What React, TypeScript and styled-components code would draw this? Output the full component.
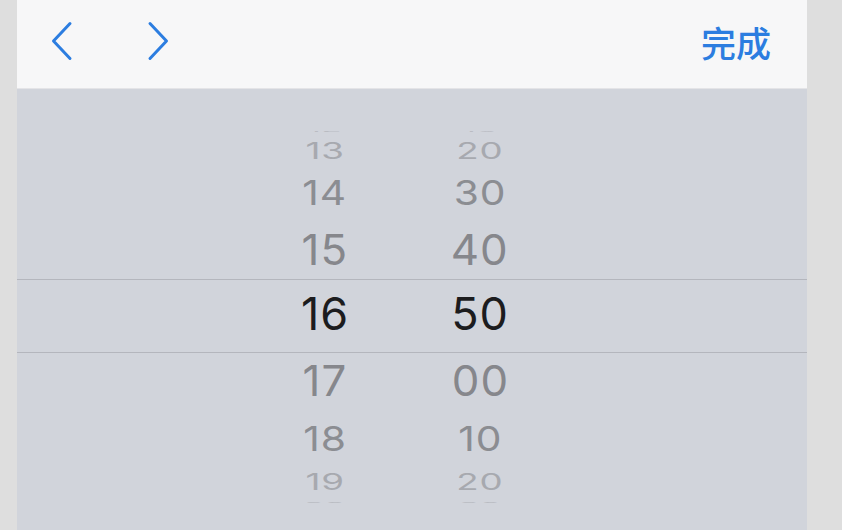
import React from "react";
import styled, { createGlobalStyle } from "styled-components";

const Global = createGlobalStyle`
  html, body { margin: 0; padding: 0; background: #dedede; }
  body { font-family: Inter, "Noto Sans", "Noto Sans CJK SC", sans-serif; }
  * { box-sizing: border-box; }
`;

const Page = styled.div`
  height: 530px;
  overflow: hidden;
  display: flex;
  padding-left: 17px;
  background: #dedede;
`;

const Panel = styled.div`
  width: 790px;
  display: flex;
  flex-direction: column;
`;

const Toolbar = styled.div`
  height: 89px;
  flex-shrink: 0;
  display: flex;
  align-items: center;
  justify-content: space-between;
  padding: 0 36px 0 33px;
  background: #f7f7f8;
  border-bottom: 1px solid #e4e4e7;
`;

const Nav = styled.div`
  display: flex;
  align-items: center;
  gap: 72px;
  margin-top: -7px;
`;

const NavButton = styled.button`
  border: 0;
  background: none;
  padding: 0;
  width: 24px;
  height: 40px;
  display: flex;
  align-items: center;
  justify-content: center;
  cursor: pointer;
`;

const Done = styled.button`
  border: 0;
  background: none;
  padding: 0;
  color: #2c7de0;
  font-family: "Noto Sans CJK SC", "Noto Sans", sans-serif;
  font-size: 35px;
  font-weight: 500;
  line-height: 1;
  margin-top: -5px;
  cursor: pointer;
`;

const Picker = styled.div`
  position: relative;
  height: 456px;
  flex-shrink: 0;
  display: flex;
  align-items: center;
  justify-content: center;
  padding-right: 19px;
  background: #d1d4db;
  overflow: hidden;
`;

const SelectionBand = styled.div`
  position: absolute;
  left: 0;
  right: 0;
  top: 190px;
  height: 74px;
  border-top: 1px solid #b4b6bd;
  border-bottom: 1px solid #b4b6bd;
  pointer-events: none;
`;

const Wheel = styled.div`
  width: 155px;
  height: 372px;
  overflow: hidden;
  display: grid;
  align-items: center;
  justify-items: center;
`;

const Item = styled.div<{ $selected: boolean }>`
  grid-area: 1 / 1;
  height: 73px;
  padding-bottom: 7px;
  display: flex;
  align-items: center;
  justify-content: center;
  font-family: Inter, "Liberation Sans", sans-serif;
  font-size: 45px;
  font-weight: 400;
  letter-spacing: 1px;
  line-height: 1;
  color: ${(p) => (p.$selected ? "#1c1c1e" : "#86878c")};
  white-space: nowrap;
`;

const R = 191;
const STEP = (20 * Math.PI) / 180;
const OPACITY = [1, 1, 0.92, 0.55, 0.3];

function WheelColumn({ values }: { values: string[] }) {
  const mid = Math.floor(values.length / 2);
  return (
    <Wheel>
      {values.map((v, i) => {
        const k = i - mid;
        const a = k * STEP;
        const c = Math.cos(a);
        const sx = 1 / (1 + 0.45 * (1 - c));
        return (
          <Item
            key={i}
            $selected={k === 0}
            style={{
              transform: `translateY(${(R * Math.sin(a)).toFixed(2)}px) scale(${sx.toFixed(3)}, ${c.toFixed(3)})`,
              opacity: OPACITY[Math.abs(k)],
            }}
          >
            {v}
          </Item>
        );
      })}
    </Wheel>
  );
}

const Chevron = ({ dir }: { dir: "left" | "right" }) => (
  <svg width="22" height="40" viewBox="0 0 22 40" fill="none">
    <path
      d={dir === "left" ? "M19 2.5 L2.5 20 L19 37.5" : "M3 2.5 L19.5 20 L3 37.5"}
      stroke="#2c7de0"
      strokeWidth="3"
      strokeLinecap="round"
      strokeLinejoin="round"
    />
  </svg>
);

export default function App() {
  const hours = ["12", "13", "14", "15", "16", "17", "18", "19", "20"];
  const minutes = ["10", "20", "30", "40", "50", "00", "10", "20", "30"];
  return (
    <>
      <Global />
      <Page>
        <Panel>
          <Toolbar>
            <Nav>
              <NavButton aria-label="上一个">
                <Chevron dir="left" />
              </NavButton>
              <NavButton aria-label="下一个">
                <Chevron dir="right" />
              </NavButton>
            </Nav>
            <Done>完成</Done>
          </Toolbar>
          <Picker>
            <WheelColumn values={hours} />
            <WheelColumn values={minutes} />
            <SelectionBand />
          </Picker>
        </Panel>
      </Page>
    </>
  );
}
